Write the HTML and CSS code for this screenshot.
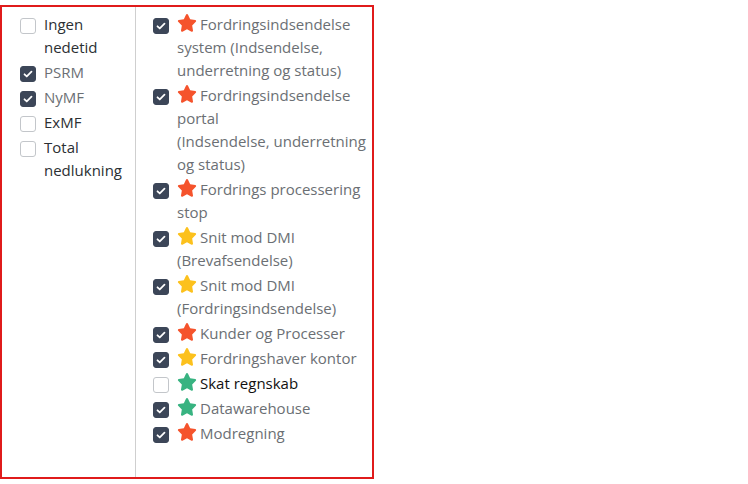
FILE: index.html
```html
<!DOCTYPE html>
<html>
<head>
<meta charset="utf-8">
<link rel="stylesheet" href="styles.css">
</head>
<body>
<svg width="0" height="0" class="defs">
  <defs>
    <symbol id="star" viewBox="0 0 24 24">
      <path d="M12 1.2c.5 0 .9.3 1.1.7l2.7 5.6 6.1.9c.5.1.9.4 1 .9.2.5 0 1-.3 1.3l-4.4 4.3 1 6.1c.1.5-.1 1-.5 1.3-.4.3-.9.3-1.3.1L12 19.5l-5.4 2.9c-.4.2-.9.2-1.3-.1-.4-.3-.6-.8-.5-1.3l1-6.1-4.4-4.3c-.4-.3-.5-.8-.3-1.3.1-.5.5-.8 1-.9l6.1-.9 2.7-5.6c.2-.4.6-.7 1.1-.7z"/>
    </symbol>
  </defs>
</svg>
<div class="panel">
  <div class="col col-left">
    <label class="item"><span class="box"></span><span class="txt">Ingen nedetid</span></label>
    <label class="item checked"><span class="box"><svg viewBox="0 0 16 16"><path d="M4 8.3l2.6 2.5L12 5.4"/></svg></span><span class="txt">PSRM</span></label>
    <label class="item checked"><span class="box"><svg viewBox="0 0 16 16"><path d="M4 8.3l2.6 2.5L12 5.4"/></svg></span><span class="txt">NyMF</span></label>
    <label class="item"><span class="box"></span><span class="txt">ExMF</span></label>
    <label class="item"><span class="box"></span><span class="txt">Total nedlukning</span></label>
  </div>
  <div class="col col-right">
    <label class="item checked"><span class="box"><svg viewBox="0 0 16 16"><path d="M4 8.3l2.6 2.5L12 5.4"/></svg></span><span class="txt"><svg class="star red"><use href="#star"/></svg>Fordringsindsendelse system (Indsendelse, underretning og status)</span></label>
    <label class="item checked"><span class="box"><svg viewBox="0 0 16 16"><path d="M4 8.3l2.6 2.5L12 5.4"/></svg></span><span class="txt"><svg class="star red"><use href="#star"/></svg>Fordringsindsendelse portal<br>(Indsendelse, underretning og status)</span></label>
    <label class="item checked"><span class="box"><svg viewBox="0 0 16 16"><path d="M4 8.3l2.6 2.5L12 5.4"/></svg></span><span class="txt"><svg class="star red"><use href="#star"/></svg>Fordrings processering stop</span></label>
    <label class="item checked"><span class="box"><svg viewBox="0 0 16 16"><path d="M4 8.3l2.6 2.5L12 5.4"/></svg></span><span class="txt"><svg class="star yellow"><use href="#star"/></svg>Snit mod DMI (Brevafsendelse)</span></label>
    <label class="item checked"><span class="box"><svg viewBox="0 0 16 16"><path d="M4 8.3l2.6 2.5L12 5.4"/></svg></span><span class="txt"><svg class="star yellow"><use href="#star"/></svg>Snit mod DMI (Fordringsindsendelse)</span></label>
    <label class="item checked"><span class="box"><svg viewBox="0 0 16 16"><path d="M4 8.3l2.6 2.5L12 5.4"/></svg></span><span class="txt"><svg class="star red"><use href="#star"/></svg>Kunder og Processer</span></label>
    <label class="item checked"><span class="box"><svg viewBox="0 0 16 16"><path d="M4 8.3l2.6 2.5L12 5.4"/></svg></span><span class="txt"><svg class="star yellow"><use href="#star"/></svg>Fordringshaver kontor</span></label>
    <label class="item"><span class="box"></span><span class="txt"><svg class="star green"><use href="#star"/></svg>Skat regnskab</span></label>
    <label class="item checked"><span class="box"><svg viewBox="0 0 16 16"><path d="M4 8.3l2.6 2.5L12 5.4"/></svg></span><span class="txt"><svg class="star green"><use href="#star"/></svg>Datawarehouse</span></label>
    <label class="item checked"><span class="box"><svg viewBox="0 0 16 16"><path d="M4 8.3l2.6 2.5L12 5.4"/></svg></span><span class="txt"><svg class="star red"><use href="#star"/></svg>Modregning</span></label>
  </div>
</div>
</body>
</html>
```
FILE: styles.css
```css
html, body {
  margin: 0;
  padding: 0;
  background: #fff;
}
body {
  font-family: "Open Sans", "Noto Sans", sans-serif;
  font-size: 15px;
  line-height: 23px;
  color: #212529;
}
.defs {
  position: absolute;
  width: 0;
  height: 0;
}
.panel {
  margin-top: 5px;
  width: 370px;
  height: 470px;
  border: 2px solid #e01b1b;
  display: flex;
}
.col {
  display: flex;
  flex-direction: column;
  gap: 2px;
  padding-top: 6px;
}
.col-left {
  width: 115px;
  padding-left: 18px;
  border-right: 1px solid #cfcfcf;
}
.col-right {
  flex: 1;
  padding-left: 17px;
  padding-right: 2px;
}
.item {
  display: flex;
  align-items: flex-start;
}
.box {
  flex: none;
  width: 14px;
  height: 14px;
  margin-top: 4.5px;
  margin-right: 8px;
  border: 1px solid #c3c6ca;
  border-radius: 3px;
  background: #fff;
  box-sizing: content-box;
}
.checked .box {
  background: #3c4658;
  border-color: #3c4658;
}
.box svg {
  display: block;
  width: 14px;
  height: 14px;
  fill: none;
  stroke: #fff;
  stroke-width: 2;
  stroke-linecap: round;
  stroke-linejoin: round;
}
.col-right .box {
  margin-right: 8px;
}
.txt {
  color: #2b2f33;
}
.checked .txt {
  color: #6b6f74;
}
.col-right .txt {
  color: #111;
}
.col-right .checked .txt {
  color: #6b6f74;
}
.star {
  width: 20px;
  height: 20px;
  vertical-align: -3px;
  margin-right: 3px;
}
.red { fill: #f5532c; }
.yellow { fill: #fcc11d; }
.green { fill: #38b381; }
```
